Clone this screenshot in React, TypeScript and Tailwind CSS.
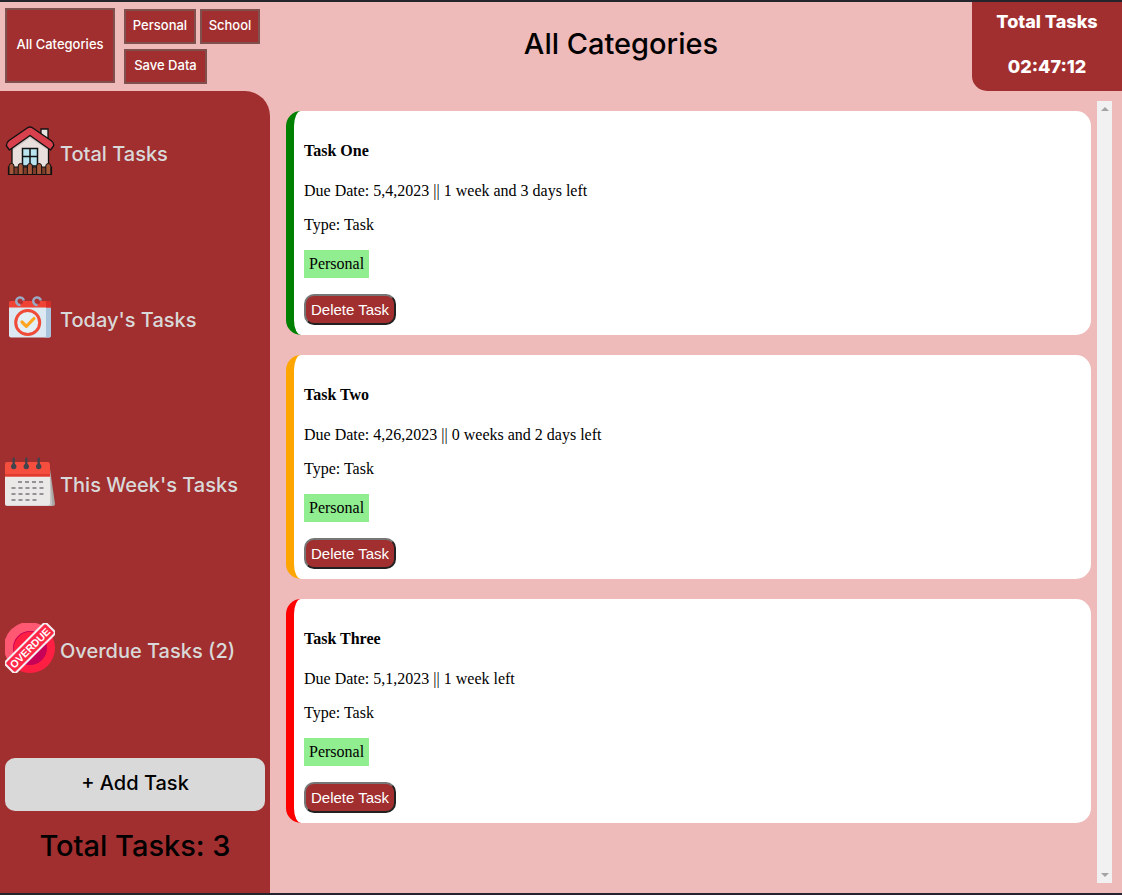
import type { ReactNode } from "react";

const uiFont = "font-['Inter',sans-serif]";

function HouseIcon() {
  return (
    <svg viewBox="0 0 50 50" className="size-[50px] shrink-0" aria-hidden="true">
      <path d="M36 3h7v18l-7-6z" fill="#e9e2e1" stroke="#111" strokeWidth="1.3" />
      <path d="M7 18 25 5l18.5 13v28H7z" fill="#e9e0de" stroke="#111" strokeWidth="1.3" />
      <path d="M8 21 25 9l17.500 12v3L25 12 8 24z" fill="#cfc5c4" />
      <path d="M1.500 20Q1 17 4 14.500L21.500 2.500Q25-.5 28.500 2.500L46 14.500Q49.500 17 48.500 20L45.500 24 25 9.500 4.500 24z" fill="#d8404d" stroke="#111" strokeWidth="1.400" strokeLinejoin="round" />
      <path d="M17.500 22.500h15V40h-15z" fill="#b8e3ef" stroke="#111" strokeWidth="1.500" />
      <path d="M25 22v18M17 30.500h16" stroke="#111" strokeWidth="1.500" />
      <path d="M3.500 41h43v7.500h-43z" fill="#7c3d2b" stroke="#111" strokeWidth="1.200" />
      {[4, 13.2, 22.4, 31.6, 40.8].map((x) => (
        <path key={x} d={`M${x} 48.500V40q0-2.500 2.500-2.500t2.500 2.500v8.500z`} fill="#a55638" stroke="#111" strokeWidth="1" />
      ))}
    </svg>
  );
}

function TodayIcon() {
  return (
    <svg viewBox="0 0 50 50" className="size-[50px] shrink-0" aria-hidden="true">
      <rect x="4" y="10" width="42" height="35.500" rx="2" fill="#dce9f3" />
      <path d="M41 10h3q2 0 2 2v31.500q0 2-2 2h-5q2 0 2-2z" fill="#a9c3dc" />
      <path d="M4 15.500v-4.500q0-2 2-2h38q2 0 2 2v4.500z" fill="#ef4335" />
      <path d="M41 9h3q2 0 2 2v4.500h-5z" fill="#d92e27" />
      <circle cx="15" cy="9.500" r="3" fill="#b22f31" />
      <circle cx="32" cy="9.500" r="3" fill="#b22f31" />
      <path d="M15.500 13a3.800 3.800 0 1 1 3.300-4.500M32.500 13a3.800 3.800 0 1 1 3.300-4.500" fill="none" stroke="#98a9c3" strokeWidth="2.500" />
      <circle cx="22.700" cy="30.500" r="12" fill="#e4eef7" stroke="#ef4b38" strokeWidth="3" />
      <path d="m17 30 4.300 4.300 7.700-7.800" fill="none" stroke="#ffa51f" strokeWidth="3.200" strokeLinecap="round" strokeLinejoin="round" />
    </svg>
  );
}

function WeekIcon() {
  return (
    <svg viewBox="0 0 50 50" className="size-[50px] shrink-0" aria-hidden="true">
      <path d="m42 13 3-1 5 35q0 2-2 2h-8z" fill="#aaa7a7" />
      <path d="M0 16h45l2 31q0 2-2 2H2q-2 0-2-2z" fill="#c7c5c5" />
      <path d="M0 16h45v30q0 2.500-3 2.500H2q-2 0-2-2z" fill="#ebe9e8" />
      <path d="M0 19.500V7q0-2 2-2h40.500Q45 5 45 8v11.500z" fill="#f54e3e" />
      <path d="M0 17h45v2.500H0z" fill="#df3b30" />
      {[8.7, 21.3, 33.7].map((x) => (
        <g key={x} fill="#42444d">
          <rect x={x - 1.2} y="0.500" width="2.400" height="9.500" rx="1.200" />
          <circle cx={x} cy="9.500" r="2.700" />
        </g>
      ))}
      <path d="M13 25h4m3 0h4m3 0h4m3 0h4M6.500 31h4m3 0h4m3 0h4m3 0h4m3 0h4M6.500 37h4m3 0h4m3 0h4m3 0h4m3 0h4M6.500 43h4m3 0h4m3 0h4m3 0h4" stroke="#77767a" strokeWidth="1.700" />
    </svg>
  );
}

function OverdueIcon() {
  return (
    <svg viewBox="0 0 50 50" className="size-[50px] shrink-0" aria-hidden="true">
      <circle cx="25" cy="25" r="25" fill="#ff1f43" />
      <path d="M4 39A25 25 0 0 1 39 4z" fill="#ff5873" />
      <circle cx="25" cy="25" r="17" fill="#c70058" />
      <path d="M13 37A17 17 0 0 1 37 13z" fill="#ff1f43" />
      <g transform="rotate(-45 25 25)">
        <rect x="-5" y="16.500" width="60" height="17" rx="3" fill="#f4eef3" />
        <rect x="-3" y="18.500" width="56" height="13" rx="1.500" fill="#ff2947" />
        <text x="25" y="28.800" textAnchor="middle" fontFamily="Liberation Sans, sans-serif" fontSize="10.500" fontWeight="700" fill="#fff">OVERDUE</text>
      </g>
    </svg>
  );
}

const views = [
  { label: "Total Tasks", icon: <HouseIcon /> },
  { label: "Today's Tasks", icon: <TodayIcon /> },
  { label: "This Week's Tasks", icon: <WeekIcon /> },
  { label: "Overdue Tasks (2)", icon: <OverdueIcon /> },
];

const tasks = [
  { title: "Task One", due: "5,4,2023 || 1 week and 3 days left", edge: "border-l-[#008000]" },
  { title: "Task Two", due: "4,26,2023 || 0 weeks and 2 days left", edge: "border-l-[#ffa500]" },
  { title: "Task Three", due: "5,1,2023 || 1 week left", edge: "border-l-[#ff0000]" },
];

function CategoryButton({ children, size }: { children: ReactNode; size: string }) {
  return (
    <button type="button" className={`shrink-0 border-2 border-[#80504f] bg-[#a12f2f] px-1 pb-[3px] text-[13px] leading-4 font-medium whitespace-nowrap text-white ${size}`}>
      {children}
    </button>
  );
}

function TaskCard({ title, due, edge }: { title: string; due: string; edge: string }) {
  return (
    <article className={`rounded-[15px] border-l-8 bg-white p-[10px] text-base leading-[18px] text-black ${edge}`}>
      <h2 className="mt-[21px] mb-[22px] font-bold">{title}</h2>
      <p className="mb-4">Due Date: {due}</p>
      <p className="mb-4">Type: Task</p>
      <p className="mb-4 w-fit bg-[#90ee90] p-[5px]">Personal</p>
      <button type="button" className="block h-[31px] rounded-[10px] border-2 border-t-[#767676] border-r-[#212121] border-b-[#212121] border-l-[#767676] bg-[#a12f2f] px-[5px] font-['Liberation_Sans',sans-serif] text-[15px] leading-[17px] text-white">
        Delete Task
      </button>
    </article>
  );
}

export default function App() {
  return (
    <div className="flex min-h-screen flex-col border-y-2 border-[#25232b] bg-[#eebaba] font-['Liberation_Serif',serif]">
      <header className={`flex h-[89px] ${uiFont}`}>
        <div className="flex w-[270px] shrink-0 items-start gap-[9px] pt-[6px] pl-[5px]">
          <CategoryButton size="h-[75px] w-[110px]">All Categories</CategoryButton>
          <div className="flex flex-wrap gap-x-1 gap-y-[5px] pt-px">
            <CategoryButton size="h-[35px] w-[72px]">Personal</CategoryButton>
            <CategoryButton size="h-[35px] w-[60px]">School</CategoryButton>
            <CategoryButton size="h-[35px] w-[83px]">Save Data</CategoryButton>
          </div>
        </div>
        <h1 className="flex flex-1 items-center justify-center pb-[6px] text-[29px] font-medium text-black">All Categories</h1>
        <div className="flex w-[150px] shrink-0 flex-col items-center gap-[21px] rounded-bl-[15px] bg-[#a12f2f] pt-2 text-[18px] leading-6 font-extrabold text-white">
          <p>Total Tasks</p>
          <p>02:47:12</p>
        </div>
      </header>

      <div className="flex flex-1">
        <aside className={`flex w-[270px] shrink-0 flex-col rounded-tr-[25px] bg-[#a12f2f] px-[5px] ${uiFont}`}>
          <nav className="flex flex-1 flex-col justify-between pt-[35px] pb-[85px]">
            {views.map(({ label, icon }) => (
              <a key={label} href="#" className="flex items-center gap-[5px] text-[20px] font-medium text-[#d9d9d9]">
                {icon}
                <span className="pt-[6px]">{label}</span>
              </a>
            ))}
          </nav>
          <button type="button" className="h-[53px] rounded-[10px] bg-[#d9d9d9] pb-1 text-[20px] font-medium text-black">+ Add Task</button>
          <p className="pt-[17px] pb-[29px] text-center text-[29px] leading-9 font-medium text-black">Total Tasks: 3</p>
        </aside>

        <main className="flex flex-1 gap-[6px] pt-[10px] pr-[10px] pb-[10px] pl-4">
          <div className="flex flex-1 flex-col gap-5 pt-[10px]">
            {tasks.map((task) => (
              <TaskCard key={task.title} {...task} />
            ))}
          </div>
          <div className="flex w-[15px] shrink-0 flex-col items-center justify-between bg-[#f1f1f1] py-[6px]" aria-hidden="true">
            <svg viewBox="0 0 8 4" className="h-1 w-2"><path d="M0 4 4 0l4 4z" fill="#a3a3a3" /></svg>
            <svg viewBox="0 0 8 4" className="h-1 w-2"><path d="m0 0 4 4 4-4z" fill="#a3a3a3" /></svg>
          </div>
        </main>
      </div>
    </div>
  );
}
